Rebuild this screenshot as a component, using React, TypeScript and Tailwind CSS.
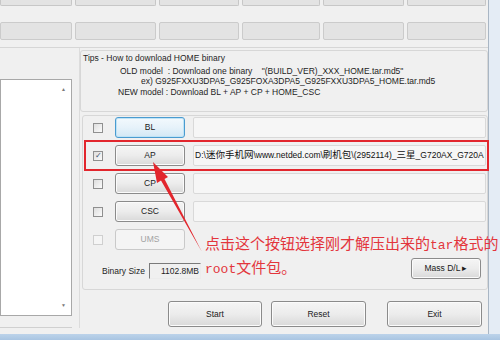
import React from 'react';

const ui = { fontFamily: '"Liberation Sans", Arial, sans-serif' };

function Btn({ label, kind = 'normal', className = '' }: { label: string; kind?: 'normal' | 'focus' | 'disabled'; className?: string }) {
  const look =
    kind === 'focus'
      ? 'border-[#4a9bd0] bg-linear-to-b from-[#f3f9fd] via-[#e6f2fa] to-[#d2e8f5] text-[#1a1a1a] shadow-[inset_0_0_0_1px_#bfe3f6]'
      : kind === 'disabled'
      ? 'border-[#c9c9c9] bg-[#f4f4f4] text-[#a3a3a3]'
      : 'border-[#8b8b8b] bg-linear-to-b from-[#f5f5f5] via-[#ececec] to-[#d9d9d9] text-[#1a1a1a] shadow-[inset_0_0_0_1px_#fbfbfb]';
  return (
    <div className={`flex shrink-0 items-center justify-center rounded-[3px] border text-[8.5px] ${look} ${className}`}>
      {label}
    </div>
  );
}

function Check({ checked = false, disabled = false }: { checked?: boolean; disabled?: boolean }) {
  return (
    <div
      className={`w-[10px] h-[10px] border flex items-center justify-center ${
        disabled ? 'border-[#cfcfcf] bg-[#f5f5f5]' : 'border-[#8f8f8f] bg-linear-to-br from-[#dedede] to-[#fbfbfb]'
      }`}
    >
      {checked && <span className="text-[8px] leading-none text-[#3d5272]">✓</span>}
    </div>
  );
}

function Row({ label, kind, checked, disabled, children }: { label: string; kind?: 'normal' | 'focus' | 'disabled'; checked?: boolean; disabled?: boolean; children?: React.ReactNode }) {
  return (
    <div className="flex items-center h-[21px]">
      <div className="ml-[10px] shrink-0">
        <Check checked={checked} disabled={disabled} />
      </div>
      <Btn label={label} kind={kind} className="ml-[12px] w-[70px] h-[21px]" />
      {!disabled && (
        <div className="ml-[8px] mr-[1px] flex-1 min-w-0 h-[21px] border border-[#d9d9d9] rounded-[2px] bg-[#f6f6f6] overflow-hidden whitespace-nowrap">
          {children}
        </div>
      )}
    </div>
  );
}

const topCells = ['w-[72px]', 'w-[81px]', 'w-[80px]', 'w-[78px]', 'w-[81px]', 'w-[79px]'];

export default function App() {
  const cjk = { fontFamily: '"Noto Sans CJK SC", sans-serif' };
  const mono = { fontFamily: '"Liberation Mono", monospace' };
  return (
    <div className="relative w-[500px] h-[340px] overflow-hidden flex flex-col bg-[#c8dbef]" style={ui}>
      <div className="flex h-[334px]">
        <div className="w-[489px] shrink-0 bg-[#f0f0f0] border-r border-[#a9b6c4] flex flex-col">
          {/* status cells */}
          <div className="flex gap-[3px] h-[6px]">
            {topCells.map((w, i) => (
              <div key={i} className={`${w} shrink-0 h-full bg-[#e3e3e3] border border-t-0 border-[#c7c7c7] rounded-b-[2px]`} />
            ))}
          </div>
          <div className="flex gap-[3px] h-[18px] mt-[16px]">
            {topCells.map((w, i) => (
              <div key={i} className={`${w} shrink-0 h-full bg-[#e3e3e3] border border-[#cbcbcb] rounded-[2px]`} />
            ))}
          </div>
          <div className="mt-[7px] border-t border-[#d6d6d6]" />

          <div className="flex flex-1">
            {/* log */}
            <div className="w-[80px] shrink-0 flex flex-col border-r border-[#dcdcdc] mb-[6px]">
              <div className="mt-[31px] w-[72px] h-[237px] bg-white border border-[#a8a8a8] flex justify-end">
                <div className="w-[15px] flex flex-col justify-between items-center py-[6px] text-[5px] text-[#7a7a7a]">
                  <span>▲</span>
                  <span>▼</span>
                </div>
              </div>
              <div className="flex-1 border-b border-[#d0d0d0] mr-[7px]" />
            </div>

            {/* right side */}
            <div className="flex-1 min-w-0 flex flex-col">
              <div className="mt-[2px] h-[62px] border border-[#d7d7d7] rounded-[3px] text-[8.5px] text-[#1e1e1e] leading-[10.5px] overflow-hidden">
                <div className="pl-[2px] pt-[2px] mb-[2px]">Tips - How to download HOME binary</div>
                <div className="pl-[39px] whitespace-pre">OLD model  : Download one binary    "(BUILD_VER)_XXX_HOME.tar.md5"</div>
                <div className="pl-[60px] whitespace-pre">ex) G925FXXU3DPA5_G925FOXA3DPA5_G925FXXU3DPA5_HOME.tar.md5</div>
                <div className="pl-[37px] whitespace-pre">NEW model : Download BL + AP + CP + HOME_CSC</div>
              </div>

              <div className="ml-[2px] mt-[3px] h-[175px] border border-[#d7d7d7] rounded-[3px] flex flex-col pt-[1px] gap-[7px]">
                <Row label="BL" kind="focus" />
                <Row label="AP" checked>
                  <div className="pl-[1px] pt-[2px] text-[8.5px] leading-[12px] text-[#111]">
                    D:\<span className="text-[9.5px]" style={cjk}>迷你手机网</span>\www.netded.com\<span className="text-[9.5px]" style={cjk}>刷机包</span>\(2952114)_<span className="text-[9.5px]" style={cjk}>三星</span>_G720AX_G720A
                  </div>
                </Row>
                <Row label="CP" />
                <Row label="CSC" />
                <Row label="UMS" kind="disabled" disabled />
                <div className="flex items-center mt-[1px] h-[21px]">
                  <span className="ml-[19px] text-[8.5px] text-[#1e1e1e] mt-[5px]">Binary Size</span>
                  <div className="ml-[4px] mt-[4px] w-[52px] h-[16px] border border-t-[#7a7a7a] border-l-[#7a7a7a] border-b-[#ececec] border-r-[#ececec] bg-[#f0f0f0] text-[8.5px] text-right pr-[1px] leading-[14px] text-[#1e1e1e]">
                    1102.8MB
                  </div>
                  <div className="flex-1" />
                  <Btn label="Mass D/L ▸" className="w-[70px] h-[21px] mr-[6px]" />
                </div>
              </div>

              <div className="flex mt-[11px] ml-[88px]">
                <Btn label="Start" className="w-[94px] h-[26px]" />
                <Btn label="Reset" className="ml-[9px] w-[95px] h-[26px]" />
                <Btn label="Exit" className="ml-[21px] w-[95px] h-[26px]" />
              </div>
            </div>
          </div>
        </div>
        <div className="flex-1 bg-[#e4ecf5]" />
      </div>
      <div className="flex-1 bg-linear-to-b from-[#bcd3ea] to-[#a9c5e2]" />

      {/* annotation */}
      <div className="absolute left-[84px] top-[140px] w-[405px] h-[31px] border-2 border-[#e2262d]" />
      <svg className="absolute inset-0 pointer-events-none" width="500" height="340">
        <polygon points="153,162 168,177 164.5,179 202,252 161,180.5 157,183" fill="#e2262d" />
      </svg>
      <div className="absolute left-[205px] top-[232px] text-[15px] leading-[21px] text-[#e3353c] whitespace-nowrap" style={cjk}>
        <div>
          点击这个按钮选择刚才解压出来的<span className="text-[13px]" style={mono}>tar</span>格式的
        </div>
        <div>
          <span className="text-[13px]" style={mono}>root</span>文件包。
        </div>
      </div>
    </div>
  );
}
